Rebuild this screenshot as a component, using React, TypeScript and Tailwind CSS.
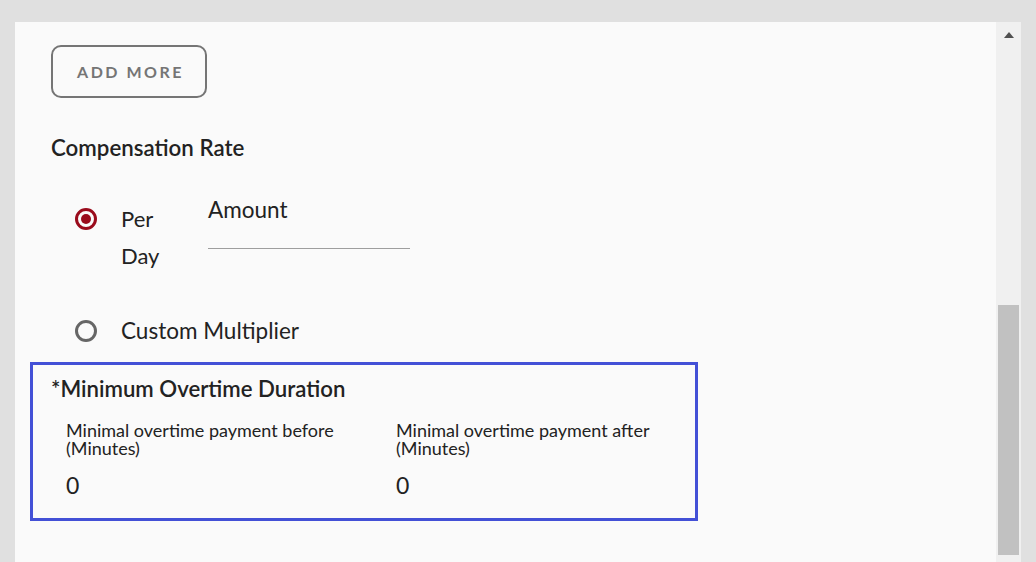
import React from "react";

function Radio({ checked }: { checked?: boolean }) {
  return (
    <span
      className={`flex h-[22px] w-[22px] shrink-0 items-center justify-center rounded-full border-[3px] ${
        checked ? "border-[#9a0b1c]" : "border-[#666666]"
      }`}
    >
      {checked && <span className="h-[10px] w-[10px] rounded-full bg-[#9a0b1c]" />}
    </span>
  );
}

export default function App() {
  return (
    <div
      className="flex h-[562px] w-[1036px] overflow-hidden bg-[#e0e0e0] pl-[15px] pr-[15px] pt-[22px] text-[#222222]"
      style={{ fontFamily: "Lato, 'Open Sans', sans-serif" }}
    >
      <div className="flex flex-1 bg-[#fafafa]">
        <div className="flex-1 pl-[36px] pt-[23px]">
          <button className="flex h-[53px] w-[156px] items-center justify-center rounded-[10px] border-2 border-[#757575] pl-[3px] text-[16px] font-bold tracking-[2.5px] text-[#757575]">
            ADD MORE
          </button>

          <h2 className="mt-[36px] text-[22.3px] font-semibold leading-[28px] text-[#222222]">
            Compensation Rate
          </h2>

          <div className="mt-[38px] flex items-start">
            <div className="ml-[24px] mt-[8px]">
              <Radio checked />
            </div>
            <div className="ml-[24px] w-[60px] text-[22px] leading-[37px]">Per Day</div>
            <div className="-mt-[4px] ml-[27px] w-[202px]">
              <div className="text-[22.5px] leading-[28px]">Amount</div>
              <div className="mt-[24px] h-px bg-[#9e9e9e]" />
            </div>
          </div>

          <div className="mt-[43px] flex items-center">
            <div className="ml-[24px]">
              <Radio />
            </div>
            <div className="ml-[24px] text-[22.5px] leading-[28px]">Custom Multiplier</div>
          </div>

          <div className="-ml-[21px] mt-[17px] h-[159px] w-[668px] border-[3px] border-[#4350d6] pl-[18px] pt-[10px]">
            <div className="text-[22.2px] font-semibold leading-[28px]">*Minimum Overtime Duration</div>
            <div className="mt-[18px] grid w-[660px] grid-cols-[330px_330px] pl-[15px]">
              <div>
                <div className="text-[18px] leading-[18px]">
                  Minimal overtime payment before
                  <br />
                  (Minutes)
                </div>
                <div className="mt-[14px] text-[23px] leading-[28px]">0</div>
              </div>
              <div>
                <div className="text-[18px] leading-[18px]">
                  Minimal overtime payment after
                  <br />
                  (Minutes)
                </div>
                <div className="mt-[14px] text-[23px] leading-[28px]">0</div>
              </div>
            </div>
          </div>
        </div>

        <div className="flex w-[25px] flex-col items-center bg-[#f0f0f0]">
          <div className="mt-[10px] h-0 w-0 border-x-[5px] border-b-[6px] border-x-transparent border-b-[#505050]" />
          <div className="mt-[267px] h-[250px] w-[21px] bg-[#c1c1c1]" />
        </div>
      </div>
    </div>
  );
}
